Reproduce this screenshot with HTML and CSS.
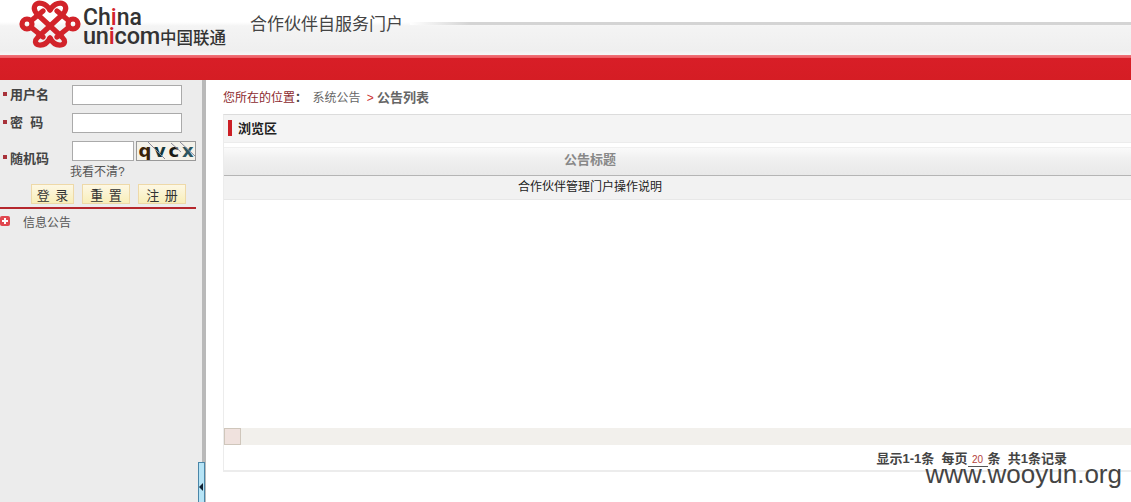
FILE: index.html
```html
<!DOCTYPE html>
<html lang="zh-CN">
<head>
    <meta charset="UTF-8">
    <title>合作伙伴自服务门户</title>
    <link rel="stylesheet" href="styles.css">
</head>
<body>
    <!-- Top banner -->
    <div class="header">
        <div class="logo">
            <svg class="logo-knot" width="64" height="48" viewBox="0 0 64 48">
                <g fill="none" stroke="#d2232a" stroke-width="5.200" stroke-linecap="round" stroke-linejoin="round">
                    <path d="M31 10 C27 3 19 1 16 5.500 C14 9 16 12 19 15 L43 37 C47 41 46 44.500 42 45 C37 45.500 33 42 31 38"/>
                    <path d="M31 10 C35 3 43 1 46 5.500 C48 9 46 12 43 15 L19 37 C15 41 16 44.500 20 45 C25 45.500 29 42 31 38"/>
                    <path d="M24 11 L13 20 M24 37 L13 28 M38 11 L49 20 M38 37 L49 28"/>
                    <circle cx="8" cy="24" r="5"/>
                    <circle cx="54" cy="24" r="5"/>
                </g>
            </svg>
            <div class="logo-text">
                <div class="logo-china">Ch<span class="logo-i">i</span>na</div>
                <div class="logo-unicom">un<span class="logo-i">i</span>com<span class="logo-cn">中国联通</span></div>
            </div>
        </div>
        <div class="portal-title">合作伙伴自服务门户</div>
        <div class="header-line"></div>
    </div>
    <div class="red-band"></div>

    <div class="page">
        <!-- Left login panel -->
        <div class="sidebar">
            <form class="login">
                <div class="login-row">
                    <label class="login-label">用户名</label>
                    <input class="login-input" type="text">
                </div>
                <div class="login-row">
                    <label class="login-label">密&nbsp;&nbsp;码</label>
                    <input class="login-input" type="password">
                </div>
                <div class="login-row captcha-row">
                    <label class="login-label">随机码</label>
                    <input class="login-input captcha-input" type="text">
                    <div class="captcha">
                        <svg class="captcha-noise" width="58" height="18" viewBox="0 0 58 18">
                            <path d="M11 0 L28 17 M34 1 L44 10 M43 0 L58 14" fill="none" stroke="#889" stroke-width="1"/>
                        </svg>
                        <span class="cq">q</span><span class="cv">v</span><span class="cc">c</span><span class="cx">x</span>
                    </div>
                </div>
                <div class="captcha-help">我看不清?</div>
                <div class="login-buttons">
                    <button type="button" class="login-btn btn-login">登 录</button>
                    <button type="button" class="login-btn btn-reset">重 置</button>
                    <button type="button" class="login-btn btn-reg">注 册</button>
                </div>
            </form>
            <div class="menu-item">
                <span class="menu-plus"></span>
                <span>信息公告</span>
            </div>
        </div>
        <div class="splitter">
            <div class="collapse-handle"><span class="collapse-arrow"></span></div>
        </div>

        <!-- Main content -->
        <div class="main">
            <div class="crumbs">
                <span class="crumb-here">您所在的位置<b>：</b></span>
                <span class="crumb-link">系统公告</span>
                <span class="crumb-sep">&gt;</span>
                <span class="crumb-now">公告列表</span>
            </div>
            <div class="panel">
                <div class="panel-title"><span class="title-mark"></span>浏览区</div>
                <div class="grid-head"><div class="grid-cell">公告标题</div></div>
                <div class="grid-row"><div class="grid-cell">合作伙伴管理门户操作说明</div></div>
                <div class="grid-body"></div>
                <div class="hscroll"><span class="hscroll-thumb"></span></div>
                <div class="pager">显示1-1条&nbsp;&nbsp;每页<span class="page-size">20</span>条&nbsp;&nbsp;共1条记录</div>
            </div>
        </div>
    </div>

    <div class="watermark">www.wooyun.org</div>
</body>
</html>
```

FILE: styles.css
```css
* {
    margin: 0;
    padding: 0;
    box-sizing: border-box;
}

html, body {
    height: 100%;
    overflow: hidden;
}

body {
    font-family: "Liberation Sans", "Noto Sans CJK SC", sans-serif;
    font-size: 12px;
    color: #444;
    background: white;
}

/* header */
.header {
    display: flex;
    height: 55px;
    background: linear-gradient(#fff 0, #fff 22px, #f4f4f4 26px, #efefef 50px, #f6f6f6 55px);
}

.logo {
    display: flex;
    width: 250px;
    padding: 0 0 0 19px;
}

.logo-knot {
    flex: none;
}

.logo-text {
    padding-top: 8px;
    color: #333;
    font-family: Roboto, sans-serif;
    font-weight: 500;
    white-space: nowrap;
}

.logo-china {
    font-size: 23px;
    line-height: 19px;
    height: 19px;
}

.logo-unicom {
    font-size: 23.500px;
    line-height: 19px;
    letter-spacing: -0.2px;
}

.logo-i {
    color: #d2232a;
}

.logo-cn {
    font-family: "Noto Sans CJK SC", sans-serif;
    font-size: 16.500px;
    letter-spacing: 0;
    font-weight: 500;
}

.portal-title {
    padding-top: 15px;
    width: 160px;
    font-size: 17px;
    line-height: 20px;
    color: #444;
    white-space: nowrap;
}

.header-line {
    flex: 1;
    height: 3px;
    margin-top: 22px;
    background: linear-gradient(90deg, #fff, #d4d4d4 60px, #d4d4d4);
}

.red-band {
    height: 25px;
    background: linear-gradient(#f0737a 0, #ec5a60 3px, #d81e27 3px, #d51d24 100%);
}

/* page body */
.page {
    display: flex;
    height: 422px;
}

.sidebar {
    width: 202px;
    flex: none;
    background: #ececec;
    padding-top: 5px;
}

.login {
    width: 196px;
    height: 120px;
    border-bottom: 2px solid #b5272d;
    box-sizing: content-box;
    padding-bottom: 2px;
}

.login-row {
    display: flex;
    align-items: center;
    height: 20px;
    margin-bottom: 8px;
}

.login-label {
    width: 72px;
    padding: 0 0 4px 10px;
    position: relative;
    font-size: 13px;
    font-weight: bold;
    color: #444;
}

.login-label::before {
    content: "";
    position: absolute;
    left: 3px;
    top: 8px;
    width: 4px;
    height: 4px;
    background: #a8323a;
}

.login-input {
    width: 110px;
    height: 20px;
    border: 1px solid #aaa;
    background: white;
}

.captcha-row {
    margin-bottom: 0;
}

.captcha-row .login-label {
    padding: 13px 0 0 10px;
}

.captcha-row .login-label::before {
    top: 20px;
}

.captcha-input {
    width: 62px;
}

.captcha {
    position: relative;
    display: flex;
    align-items: center;
    justify-content: space-around;
    width: 60px;
    height: 20px;
    margin-left: 2px;
    border: 1px solid #999;
    background: #f4f2ea;
    font-family: "DejaVu Sans", sans-serif;
    font-size: 18px;
    line-height: 18px;
    font-weight: bold;
    overflow: hidden;
}

.captcha-noise {
    position: absolute;
    left: 0;
    top: 0;
}

.cq {
    color: #3a2208;
}

.cv {
    color: #14383a;
}

.cc {
    color: #1a1a14;
}

.cx {
    color: #2c5660;
}

.captcha-help {
    padding-left: 70px;
    margin-top: 2px;
    height: 21px;
    font-size: 12px;
    line-height: 18px;
    color: #555;
}

.login-buttons {
    display: flex;
    padding-left: 31px;
    gap: 8px;
}

.login-btn {
    height: 20px;
    border: 1px solid #eed9a8;
    background: linear-gradient(#fdf7e4, #f8eeb9);
    font-family: inherit;
    font-size: 13px;
    color: #333;
    word-spacing: 2px;
}

.btn-login {
    width: 43px;
}

.btn-reset, .btn-reg {
    width: 48px;
}

.menu-item {
    display: flex;
    align-items: center;
    gap: 13px;
    margin-top: 3px;
    height: 18px;
    font-size: 12px;
    color: #555;
}

.menu-plus {
    position: relative;
    width: 10px;
    height: 10px;
    border-radius: 2px;
    background: #e0474f;
}

.menu-plus::before {
    content: "";
    position: absolute;
    left: 2px;
    top: 4px;
    width: 6px;
    height: 2px;
    background: white;
}

.menu-plus::after {
    content: "";
    position: absolute;
    left: 4px;
    top: 2px;
    width: 2px;
    height: 6px;
    background: white;
}

.splitter {
    position: relative;
    width: 4px;
    flex: none;
    background: #b9b9b9;
}

.collapse-handle {
    position: absolute;
    left: -4px;
    bottom: 0;
    width: 7px;
    height: 40px;
    border: 1px solid #4a86a8;
    border-bottom: 0;
    background: #b6e4f6;
}

.collapse-arrow {
    position: absolute;
    left: 0;
    top: 20px;
    border-top: 4px solid transparent;
    border-bottom: 4px solid transparent;
    border-right: 4px solid #123;
}

/* main area */
.main {
    flex: 1;
    min-width: 0;
    padding-left: 17px;
    background: white;
}

.crumbs {
    height: 34px;
    padding-top: 9px;
    font-size: 12px;
    line-height: 17px;
    color: #666;
}

.crumb-here {
    color: #8c2a2e;
    margin-right: 2px;
}

.crumb-here b {
    color: #444;
}

.crumb-sep {
    color: #c33;
    margin: 0 0 0 3px;
}

.crumb-now {
    font-size: 13px;
    font-weight: bold;
    color: #666;
}

.panel {
    height: 358px;
    border: 2px solid #ececec;
    border-top: 1px solid #dcdcdc;
    border-right: 0;
    border-left-width: 1px;
}

.panel-title {
    display: flex;
    align-items: center;
    height: 28px;
    padding: 0 0 2px 4px;
    background: #f4f4f4;
    border-bottom: 1px solid #ececec;
    font-size: 13px;
    font-weight: bold;
    color: #222;
}

.title-mark {
    width: 4px;
    height: 16px;
    margin-right: 6px;
    background: #cc1f25;
}

.grid-head {
    margin-top: 4px;
    height: 29px;
    background: linear-gradient(#fafafa, #f0f0f0 40%, #e9e9e9);
    border-bottom: 1px solid #b5b5b5;
    border-top: 1px solid #f0f0f0;
    font-size: 13px;
    font-weight: bold;
    color: #888;
    line-height: 23px;
}

.grid-row {
    height: 24px;
    background: #f2f2f2;
    border-bottom: 1px solid #e8e8e8;
    line-height: 22px;
    color: #222;
}

.grid-cell {
    width: 732px;
    text-align: center;
}

.grid-body {
    height: 228px;
}

.hscroll {
    height: 17px;
    background: #f2f0ec;
}

.hscroll-thumb {
    display: block;
    width: 17px;
    height: 17px;
    background: #f0e2de;
    border: 1px solid #cfc6bb;
}

.pager {
    padding: 5px 64px 0 0;
    text-align: right;
    font-weight: bold;
    font-size: 13px;
    line-height: 18px;
    color: #444;
}

.page-size {
    display: inline-block;
    width: 20px;
    border-bottom: 1px solid #555;
    font-size: 10px;
    font-weight: normal;
    text-align: center;
    color: #b4433c;
    line-height: 13px;
}

.watermark {
    position: absolute;
    right: 9px;
    bottom: 14px;
    font-size: 26px;
    line-height: 28px;
    color: #444;
}
```
